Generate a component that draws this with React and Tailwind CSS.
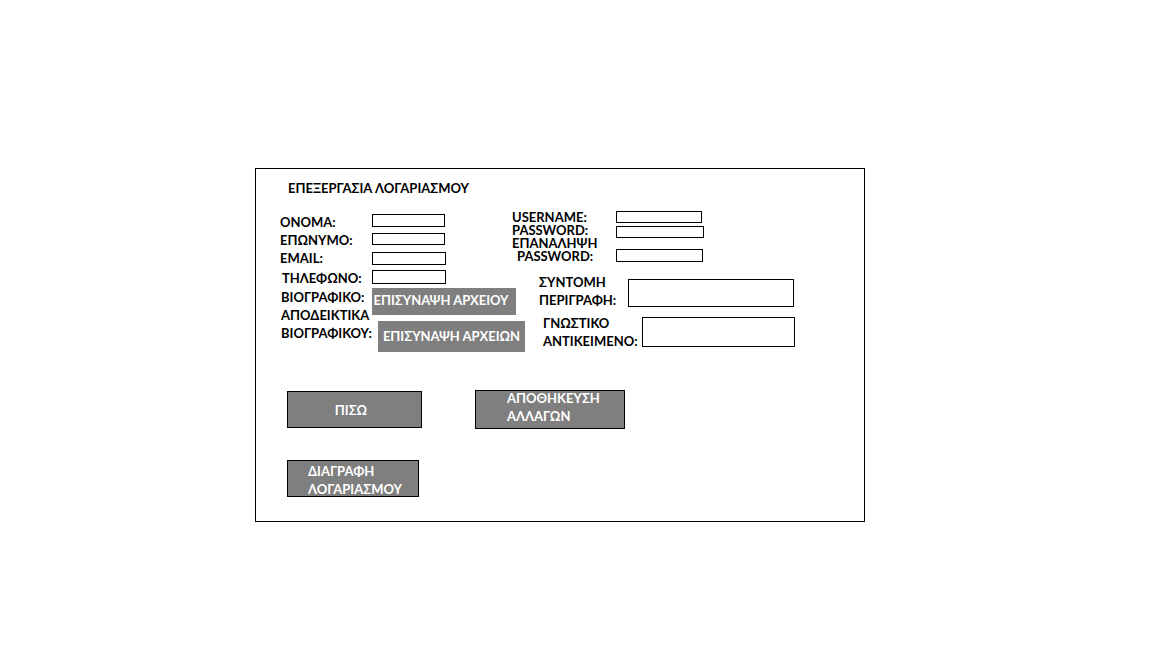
import React from 'react';

function Field({ id, label, type = 'text', rowClass, labelClass, inputClass }) {
  return (
    <div className={`flex ${rowClass}`}>
      <label htmlFor={id} className={`shrink-0 whitespace-pre-line ${labelClass}`}>{label}</label>
      <input id={id} type={type} className={`shrink-0 border border-black bg-white px-1 text-[10px] outline-none ${inputClass}`} />
    </div>
  );
}

function Area({ id, label, rowClass, labelClass, areaClass }) {
  return (
    <div className={`flex items-start leading-[18px] ${rowClass}`}>
      <label htmlFor={id} className={`shrink-0 whitespace-pre-line ${labelClass}`}>{label}</label>
      <textarea id={id} className={`shrink-0 resize-none border border-black bg-white px-1 outline-none ${areaClass}`} />
    </div>
  );
}

export default function App() {
  return (
    <main className="min-h-screen bg-white pt-[168px] pr-[287px] pb-10 pl-[255px] font-[Lato,Carlito,'Open_Sans',sans-serif] text-[13px] leading-[18px] font-bold text-black">
      <form className="border border-black pt-[10px] pb-6 pl-6" onSubmit={(e) => e.preventDefault()}>
        <h1 className="pl-2">ΕΠΕΞΕΡΓΑΣΙΑ ΛΟΓΑΡΙΑΣΜΟΥ</h1>
        <div className="mt-[14px] grid grid-cols-[232px_1fr]">
          <div className="flex flex-col pt-0.5">
            <Field id="name" label="ΟΝΟΜΑ:" rowClass="h-[18px] items-start" labelClass="w-[92px]" inputClass="mt-px h-[13px] w-[73px]" />
            <Field id="surname" label="ΕΠΩΝΥΜΟ:" rowClass="h-[18px] items-start" labelClass="w-[92px]" inputClass="mt-[2px] h-[12px] w-[73px]" />
            <Field id="email" label="EMAIL:" type="email" rowClass="h-[18px] items-center" labelClass="w-[92px]" inputClass="h-[13px] w-[74px]" />
            <Field id="phone" label="ΤΗΛΕΦΩΝΟ:" type="tel" rowClass="mt-[2px] h-[18px] items-start" labelClass="w-[92px] pl-0.5" inputClass="mt-px h-[14px] w-[74px]" />
            <div className="mt-px flex h-[18px] items-start">
              <label htmlFor="cv" className="w-[92px] shrink-0 pl-px">ΒΙΟΓΡΑΦΙΚΟ:</label>
              <button id="cv" type="button" className="h-[27px] w-[144px] shrink-0 bg-[#7f7f7f] pr-1.5 pb-1 whitespace-nowrap text-white">
                ΕΠΙΣΥΝΑΨΗ ΑΡΧΕΙΟΥ
              </button>
            </div>
            <div className="flex items-start">
              <label htmlFor="proof" className="w-[97px] shrink-0 pl-px">
                ΑΠΟΔΕΙΚΤΙΚΑ<br />ΒΙΟΓΡΑΦΙΚΟΥ:
              </label>
              <button id="proof" type="button" className="mt-[15px] ml-px h-[31px] w-[147px] shrink-0 bg-[#7f7f7f] pb-px whitespace-nowrap text-white">
                ΕΠΙΣΥΝΑΨΗ ΑΡΧΕΙΩΝ
              </button>
            </div>
          </div>
          <div className="flex flex-col leading-[13px]">
            <Field id="username" label="USERNAME:" rowClass="h-[13px] items-start" labelClass="w-[104px]" inputClass="h-[12px] w-[86px]" />
            <Field id="password" label="PASSWORD:" type="password" rowClass="h-[13px] items-start" labelClass="w-[104px]" inputClass="mt-[2px] h-[12px] w-[88px]" />
            <div className="flex h-[26px] items-start">
              <label htmlFor="repeat" className="w-[104px] shrink-0">
                ΕΠΑΝΑΛΗΨΗ<span className="block pl-[5px]">PASSWORD:</span>
              </label>
              <input id="repeat" type="password" className="mt-3 h-[13px] w-[87px] shrink-0 border border-black bg-white px-1 text-[10px] outline-none" />
            </div>
            <Area id="about" label={'ΣΥΝΤΟΜΗ\nΠΕΡΙΓΡΑΦΗ:'} rowClass="mt-[10px] pl-[27px]" labelClass="w-[89px]" areaClass="mt-[6px] h-[28px] w-[166px]" />
            <Area id="subject" label={'ΓΝΩΣΤΙΚΟ\nΑΝΤΙΚΕΙΜΕΝΟ:'} rowClass="mt-[5px] pl-[31px]" labelClass="w-[99px]" areaClass="mt-[3px] h-[30px] w-[153px]" />
          </div>
        </div>
        <div className="mt-[38px] ml-[7px] flex items-center gap-[53px] text-white">
          <button type="button" className="h-[37px] w-[135px] border border-black bg-[#7f7f7f] pr-[7px]">ΠΙΣΩ</button>
          <button type="submit" className="flex h-[39px] w-[150px] items-start border border-black bg-[#7f7f7f] pl-[31px] text-left">
            <span className="-mt-0.5">ΑΠΟΘΗΚΕΥΣΗ<br />ΑΛΛΑΓΩΝ</span>
          </button>
        </div>
        <button type="button" className="mt-[31px] ml-[7px] flex h-[37px] w-[132px] items-start border border-black bg-[#7f7f7f] pt-px pl-5 text-left text-white">
          <span>ΔΙΑΓΡΑΦΗ<br />ΛΟΓΑΡΙΑΣΜΟΥ</span>
        </button>
      </form>
    </main>
  );
}
